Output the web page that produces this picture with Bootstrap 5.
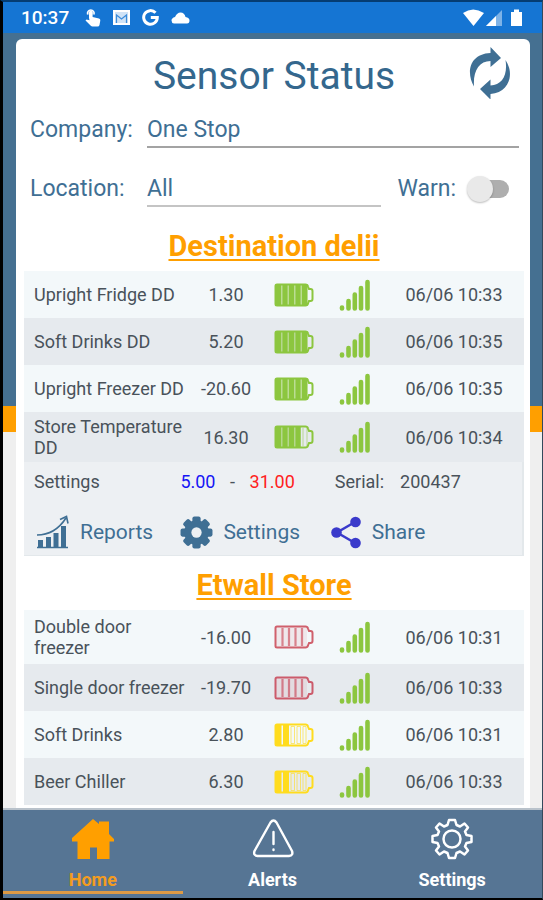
<!DOCTYPE html>
<html lang="en">
<head>
<meta charset="utf-8">
<meta name="viewport" content="width=device-width, initial-scale=1">
<title>Sensor Status</title>
<link href="https://cdn.jsdelivr.net/npm/bootstrap@5.3.0/dist/css/bootstrap.min.css" rel="stylesheet">
<style>
  :root { --steel: #3f6f94; --amber: #ff9f00; }
  body { font-family: Roboto, "Liberation Sans", sans-serif; background: #000; color: #49525a; font-size: 18px; line-height: 21px; }
  .phone { border: solid #000; border-width: 2px 1px 2px 3px; border-top-color: #053c72; border-right-color: #34495c; }
  .status-bar { background: #1575d3; color: #fff; height: 31px; padding: 0 20px 0 18px; font-size: 19px; font-weight: 500; gap: 12px; }
  .backdrop { background: linear-gradient(#457091 373px, var(--amber) 373px 399px, #efefef 399px); padding: 6px 12px 0 13px; }
  .panel { background: #fff; border-radius: 6px 6px 0 0; padding: 13px 6px 3px 8px; }
  .page-title { font-size: 39px; line-height: 48px; font-weight: 400; color: #34678d; }
  .refresh { width: 44px; height: 52px; right: 12px; top: -5px; }
  .filters { color: var(--steel); font-size: 23px; line-height: 37px; padding: 11px 5px 0 6px; gap: 22px; }
  .filters .name { width: 117px; flex: none; }
  .picker { appearance: none; border: 0; border-bottom: 2px solid #a3a3a3; background: none; color: inherit; padding: 0; height: 37px; min-width: 0; border-radius: 0; }
  .picker.dim { border-bottom-color: #c4c4c4; }
  .warn-switch { appearance: none; width: 44px; height: 28px; margin: 0 9px 0 10px; background: none; border: 0; position: relative; }
  .warn-switch::before, .warn-switch::after { content: ""; position: absolute; border-radius: 14px; }
  .warn-switch::before { left: 13px; top: 5px; width: 30px; height: 18px; background: #aeaeae; }
  .warn-switch::after { left: 1px; top: 1px; width: 26px; height: 26px; background: #e9e9e9; box-shadow: 0 1px 2px #0004; }
  .site-name { font-size: 29px; line-height: 34px; font-weight: 700; padding-bottom: 8px; }
  .site-name a { color: var(--amber); text-decoration-thickness: 2px; text-underline-offset: 3px; }
  .first { padding-top: 22px; }
  .next { padding-top: 12px; }
  .sensors { table-layout: fixed; width: 100%; }
  .sensors tr { height: 47px; background: #f3f8fa; }
  .sensors tr:nth-child(even) { background: #e6eaee; }
  .sensors tr.tall { height: 54px; }
  .sensors td, .sensors th { padding: 4px 0; text-align: center; vertical-align: middle; font-weight: 400; }
  .sensors th { padding: 4px 4px 4px 10px; text-align: left; }
  .sensors td:last-child { padding-left: 2px; }
  .sensors svg { display: block; margin: 0 auto; }
  .details { background: #edf0f3; padding: 9px 0 5px 10px; border: solid #e3e8eb; border-width: 0 2px 1px 0; }
  .thirds { display: grid; grid-template-columns: 3fr 3fr 4fr; align-items: center; }
  .actions { height: 36px; margin-top: 22px; }
  .actions a { color: var(--steel); font-size: 21px; gap: 10px; }
  .low { color: #1515f5; } .high { color: #ff2020; }
  .tabs { background: #567594; border-top: 2px solid #b9c2cb; font-weight: 700; }
  .tabs a { color: #fff; height: 88px; padding-top: 7px; position: relative; }
  .tabs a.active { color: #f39c1f; }
  .tabs a.active::after { content: ""; position: absolute; left: 0; right: 0; bottom: 4px; height: 3px; background: #dd9a45; }
  .tabs svg { display: block; margin-bottom: 8px; }
</style>
</head>
<body>
<svg width="0" height="0" class="position-absolute" aria-hidden="true">
  <symbol id="cell" viewBox="0 0 40 24">
    <path d="M3 1.500H31.500Q33.500 1.500 34 3.500L35 6H36.500Q38.500 6 38.500 8V16Q38.500 18 36.500 18H35L34 20.500Q33.500 22.500 31.500 22.500H3Q1.500 22.500 1.500 21V3Q1.500 1.500 3 1.500Z" fill="none" stroke="currentColor" stroke-width="2"/>
  </symbol>
  <symbol id="bat5" viewBox="0 0 40 24"><use href="#cell"/><path d="M1 1h33v22H1z" opacity=".55" fill="currentColor"/><path d="M2 2h5v20H2zM8.500 2h5v20h-5zM15 2h5v20h-5zM21.500 2h5v20h-5zM28 2h5v20h-5z" fill="currentColor"/></symbol>
  <symbol id="bat4" viewBox="0 0 40 24"><use href="#cell"/><path d="M1 1h26v22H1z" opacity=".55" fill="currentColor"/><path d="M2 2h5v20H2zM8.500 2h5v20h-5zM15 2h5v20h-5zM21.500 2h5v20h-5z" fill="currentColor"/><path d="M29 3v18M33 3v18" stroke="currentColor" opacity=".5"/></symbol>
  <symbol id="bat2" viewBox="0 0 40 24"><use href="#cell"/><path d="M2 2h5.500v20H2zM9 2h6v20H9z" fill="currentColor"/><path d="M17 3.500h3.500v17H17zM23 3.500h3.500v17H23zM29 3.500h3v17h-3z" fill="none" stroke="currentColor" opacity=".6"/></symbol>
  <symbol id="bat0" viewBox="0 0 40 24"><use href="#cell"/><path d="M2 2h31v20H2z" fill="currentColor" opacity=".1"/><path d="M8.500 3v18M15 3v18M21.500 3v18M28 3v18" fill="none" stroke="currentColor" stroke-width="2.200" opacity=".75"/></symbol>
  <symbol id="signal" viewBox="0 0 32 32"><path d="M3 28.500V29.500M9.500 22V29.500M15.800 15.500V29.500M22 9V29.500M28.500 3V29.500" stroke="#8cc63f" stroke-width="4.600" stroke-linecap="round"/></symbol>
</svg>

<div class="phone d-flex flex-column min-vh-100">
  <header class="status-bar d-flex align-items-center">
    <span class="me-1">10:37</span>
    <svg width="16" height="18" viewBox="0 0 16 18" fill="#fff"><path d="M4 9V3.500a1.800 1.800 0 0 1 3.600 0V8l6.400 1.500q1.500.5 1.300 2L14.500 16q-.3 1.500-2 1.500H7.500Q6.500 17.500 5.800 16.800L.5 11.500l1-1 3 .8Z"/><path d="M2.600 5.500a3.400 3.400 0 1 1 6.400 0" fill="#fff" fill-opacity=".5" stroke="#fff" stroke-width="1.400"/></svg>
    <svg width="17" height="15" viewBox="0 0 17 15"><rect width="17" height="15" rx="1.500" fill="#fff" opacity=".8"/><path d="M1 14V1H16V14Z" fill="none" stroke="#fff" stroke-width="2"/><path d="M3.500 13V5L8.500 9l5-4v8" fill="none" stroke="#1575d3" stroke-width="1.200" opacity=".8"/></svg>
    <svg width="17" height="17" viewBox="0 0 17 17"><path d="M13.500 3.800A6.800 6.800 0 1 0 15.300 8.500H8.800" fill="none" stroke="#fff" stroke-width="3"/></svg>
    <svg width="19" height="12" viewBox="0 0 19 12" fill="#fff"><path d="M3 11.500Q.5 11 .5 8.500.5 6 4 5 6 .5 9.500.5 13.500.5 14.500 5 18.500 5.500 18.500 8.500 18.500 11.500 16 11.500Z"/></svg>
    <svg class="ms-auto" width="59" height="18" viewBox="0 0 59 18" fill="#fff"><path d="M0 4Q10-3 21 4L10.500 17Z"/><path d="M23 17 39 1V17Z" opacity=".45"/><path d="M23 17 33 7V17Z"/><path d="M48 3h3V0.500h5V3h3v14H48Z"/></svg>
  </header>

  <main class="backdrop flex-grow-1 d-flex flex-column">
    <div class="panel flex-grow-1">
      <div class="position-relative text-center">
        <h1 class="page-title mb-0">Sensor Status</h1>
        <button type="button" class="refresh btn p-0 border-0 position-absolute" aria-label="Refresh">
          <svg class="d-block" width="44" height="52" viewBox="0 0 44 52" fill="#3f6f94"><path d="M6 39.500C-2 26 1 7 22.500 6V0L33 11 22.500 20V14C11 14 5 24 6 39.500Z"/><path d="M37.500 13C47 27 41 46 22.500 47V52.500L12 42 22.500 32.500V38.500C34 38 40 28 37.500 13Z"/></svg>
        </button>
      </div>
      <form class="filters d-flex flex-column">
        <div class="d-flex align-items-start">
          <label class="name" for="company">Company:</label>
          <select id="company" class="picker flex-grow-1"><option>One Stop</option></select>
        </div>
        <div class="d-flex align-items-start">
          <label class="name" for="location">Location:</label>
          <select id="location" class="picker dim flex-grow-1"><option>All</option></select>
          <label for="warn" class="ms-3">Warn:</label>
          <input type="checkbox" role="switch" id="warn" class="warn-switch align-self-center">
        </div>
      </form>

      <h2 class="site-name first text-center mb-0"><a href="#">Destination delii</a></h2>
      <table class="sensors">
        <colgroup><col style="width:33.600%"><col style="width:13.600%"><col style="width:13.600%"><col style="width:10.800%"><col></colgroup>
        <tbody>
          <tr><th scope="row">Upright Fridge DD</th><td>1.30</td><td><svg width="40" height="24" color="#8cc63f"><use href="#bat5"/></svg></td><td><svg width="32" height="32"><use href="#signal"/></svg></td><td>06/06 10:33</td></tr>
          <tr><th scope="row">Soft Drinks DD</th><td>5.20</td><td><svg width="40" height="24" color="#8cc63f"><use href="#bat5"/></svg></td><td><svg width="32" height="32"><use href="#signal"/></svg></td><td>06/06 10:35</td></tr>
          <tr><th scope="row">Upright Freezer DD</th><td>-20.60</td><td><svg width="40" height="24" color="#8cc63f"><use href="#bat5"/></svg></td><td><svg width="32" height="32"><use href="#signal"/></svg></td><td>06/06 10:35</td></tr>
          <tr><th scope="row">Store Temperature DD</th><td>16.30</td><td><svg width="40" height="24" color="#8cc63f"><use href="#bat4"/></svg></td><td><svg width="32" height="32"><use href="#signal"/></svg></td><td>06/06 10:34</td></tr>
        </tbody>
      </table>
      <div class="details">
        <div class="thirds">
          <span>Settings</span>
          <span class="d-flex"><span class="low">5.00</span><span class="mx-auto">-</span><span class="high me-4 pe-2">31.00</span></span>
          <span class="ps-2">Serial:<span class="ms-3">200437</span></span>
        </div>
        <div class="thirds actions">
          <a href="#" class="d-flex align-items-center text-decoration-none">
            <svg width="36" height="34" viewBox="0 0 36 34"><path d="M4 33V25h5v8zM12 33V22h5v11zM19.500 33V18h5v15zM27 33V11h5v22z" fill="#3f6f94"/><path d="M3 32.500H34M3 20Q21 20 32 3M26 4.500 32.500 1.500 34 8.500" fill="none" stroke="#3f6f94" stroke-width="1.600"/></svg>
            <span>Reports</span></a>
          <a href="#" class="d-flex align-items-center text-decoration-none">
            <svg width="33" height="33" viewBox="-16 -16 32 32"><g fill="#3f6f94"><g id="teeth"><rect x="-4" y="-15.500" width="8" height="31" rx="2"/><rect x="-15.500" y="-4" width="31" height="8" rx="2"/></g><use href="#teeth" transform="rotate(45)"/><circle r="12"/></g><circle r="5" fill="#edf0f3"/></svg>
            <span>Settings</span></a>
          <a href="#" class="d-flex align-items-center text-decoration-none ps-1">
            <svg width="31" height="33" viewBox="0 0 31 33"><path d="M24 6 6 16.500 24 27" fill="none" stroke="#3a3acb" stroke-width="2.500"/><g fill="#3a3acb"><circle cx="24.500" cy="6" r="5.300"/><circle cx="5.500" cy="16.500" r="5.300"/><circle cx="24.500" cy="27" r="5.300"/></g></svg>
            <span>Share</span></a>
        </div>
      </div>

      <h2 class="site-name next text-center mb-0"><a href="#">Etwall Store</a></h2>
      <table class="sensors">
        <colgroup><col style="width:33.600%"><col style="width:13.600%"><col style="width:13.600%"><col style="width:10.800%"><col></colgroup>
        <tbody>
          <tr class="tall"><th scope="row">Double door freezer</th><td>-16.00</td><td><svg width="40" height="24" color="#d0606c"><use href="#bat0"/></svg></td><td><svg width="32" height="32"><use href="#signal"/></svg></td><td>06/06 10:31</td></tr>
          <tr><th scope="row">Single door freezer</th><td>-19.70</td><td><svg width="40" height="24" color="#cc5b6b"><use href="#bat0"/></svg></td><td><svg width="32" height="32"><use href="#signal"/></svg></td><td>06/06 10:33</td></tr>
          <tr><th scope="row">Soft Drinks</th><td>2.80</td><td><svg width="40" height="24" color="#ffdc1e"><use href="#bat2"/></svg></td><td><svg width="32" height="32"><use href="#signal"/></svg></td><td>06/06 10:31</td></tr>
          <tr><th scope="row">Beer Chiller</th><td>6.30</td><td><svg width="40" height="24" color="#ffdc1e"><use href="#bat2"/></svg></td><td><svg width="32" height="32"><use href="#signal"/></svg></td><td>06/06 10:33</td></tr>
        </tbody>
      </table>
    </div>
  </main>

  <nav class="tabs sticky-bottom">
    <div class="row g-0">
      <a href="#" class="col active d-flex flex-column align-items-center text-decoration-none" aria-current="page">
        <svg width="44" height="44" viewBox="0 0 44 44" fill="#ff9f00"><path d="M22 2 28 7V4.500H38V17L43 22V24.500H38.500V42H26V30.500H19V42H6.500V24.500H1V21Z"/></svg>Home</a>
      <a href="#" class="col d-flex flex-column align-items-center text-decoration-none">
        <svg width="44" height="44" viewBox="0 0 44 44" fill="none" stroke="#fff" stroke-width="2.400" stroke-linecap="round" stroke-linejoin="round"><path d="M19.500 5.500Q22.500 1.500 25.500 5.500L41 34Q42.500 38.500 38 39H6.500Q2 38.500 3.500 34ZM22.500 15V27M22.500 32.500V33"/></svg>Alerts</a>
      <a href="#" class="col d-flex flex-column align-items-center text-decoration-none">
        <svg width="44" height="44" viewBox="-22 -22 44 44" fill="none" stroke="#fff" stroke-width="2.500" stroke-linejoin="round"><circle r="8.500"/><path d="M-3-19H3L4.500-14 8-12.500 12.500-15.500 16-11.500 13-7.500 14.500-4 19.500-3V3L14.500 4 13 7.500 16 11.500 12.500 15.500 8 12.500 4.500 14 3 19H-3L-4.500 14-8 12.500-12.500 15.500-16 11.500-13 7.500-14.500 4-19.500 3V-3L-14.500-4-13-7.500-16-11.500-12.500-15.500-8-12.500-4.500-14Z"/></svg>Settings</a>
    </div>
  </nav>
</div>
<script src="https://cdn.jsdelivr.net/npm/bootstrap@5.3.0/dist/js/bootstrap.bundle.min.js"></script>
</body>
</html>
